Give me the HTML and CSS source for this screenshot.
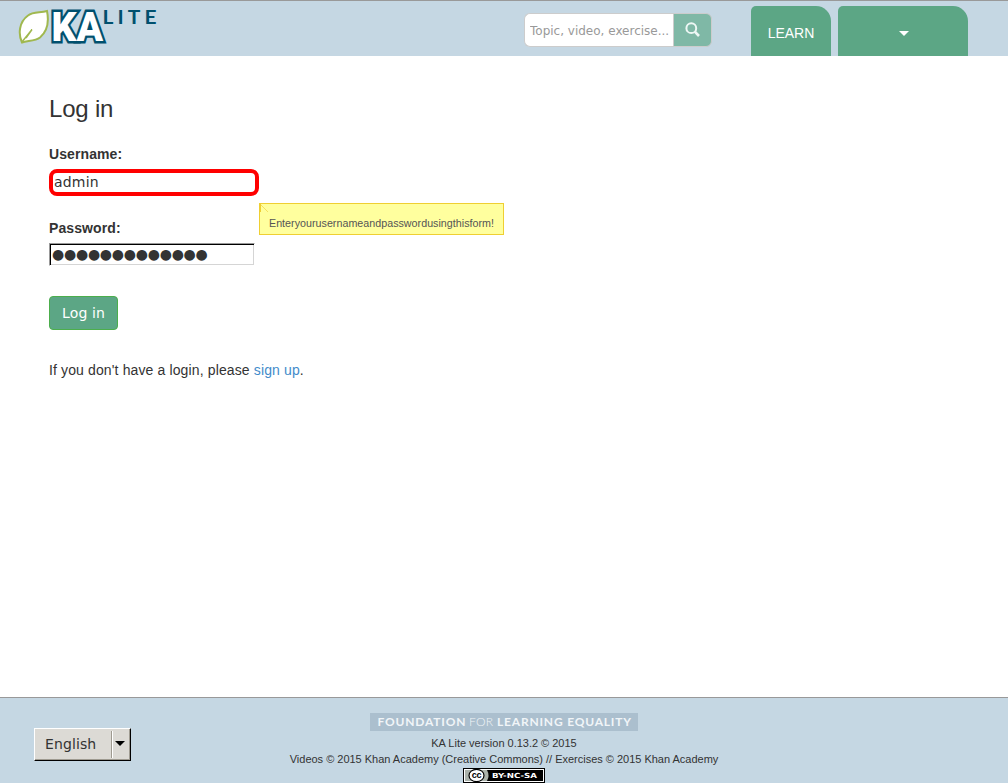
FILE: index.html
```html
<!DOCTYPE html>
<html lang="en">
<head>
<meta charset="utf-8">
<title>Log in | KA Lite</title>
<link rel="stylesheet" href="styles.css">
</head>
<body>
<header class="topbar">
  <a class="logo" aria-label="KA Lite">
    <svg width="150" height="54" viewBox="0 0 150 54">
      <path class="leaf" d="M4 41.500C0 33 1 21 10 14.500C15 10.500 22 12 29 10C31 20 29.500 30 22 36.500C17 40.500 9 39.500 4 41.500Z"/>
      <path class="vein" d="M3.500 41.500L14 28.500L8 37"/>
      <text class="logo-ka" x="33.500" y="40" textLength="51.500" lengthAdjust="spacingAndGlyphs">KA</text>
      <text class="logo-lite" x="84.500" y="22.500" textLength="58" lengthAdjust="spacingAndGlyphs">LITE</text>
    </svg>
  </a>
  <form class="search">
    <input class="search-input" type="text" placeholder="Topic, video, exercise..." aria-label="Search">
    <button class="search-button" type="button" aria-label="Search">
      <svg width="16" height="16" viewBox="0 0 16 16"><circle cx="6.300" cy="6.200" r="4.900"/><path d="M9.800 9.700L14 14"/></svg>
    </button>
  </form>
  <nav class="tabs">
    <a class="tab tab-learn">LEARN</a>
    <a class="tab tab-user"><span class="caret"></span></a>
  </nav>
</header>
<main class="content">
  <h1 class="title">Log in</h1>
  <label class="label" for="username">Username:</label>
  <div class="field-row">
    <input class="username" id="username" type="text" value="admin">
    <div class="hint"><svg class="hint-corner" width="9" height="9" viewBox="0 0 9 9"><path class="fold-side" d="M.5 0V8"/><path class="fold" d="M1 1L8 8"/></svg>Enteryourusernameandpasswordusingthisform!</div>
  </div>
  <div class="label label-password">Password:</div>
  <div class="password">●●●●●●●●●●●●●</div>
  <button class="submit" type="button">Log in</button>
  <p class="signup">If you don't have a login, please <a class="link">sign up</a>.</p>
</main>
<footer class="footer">
  <div class="language"><span class="language-name">English</span><span class="language-arrow"></span></div>
  <div class="credits">
    <svg class="foundation" width="268" height="18" viewBox="0 0 268 18">
      <text class="fle" x="7.500" y="13" textLength="88">FOUNDATION</text>
      <text class="fle fle-light" x="99" y="13" textLength="24">FOR</text>
      <text class="fle" x="127" y="13" textLength="134">LEARNING EQUALITY</text>
    </svg>
    <div class="line">KA Lite version 0.13.2 © 2015</div>
    <div class="line">Videos © 2015 Khan Academy (Creative Commons) // Exercises © 2015 Khan Academy</div>
    <svg class="license" width="82" height="15" viewBox="0 0 82 15">
      <rect width="82" height="15"/>
      <rect class="white-frame" x="1.500" y="1.500" width="79" height="12"/>
      <path class="cc-bg" d="M2 2H24Q27 7.500 24 13H2Z"/>
      <ellipse class="cc-ring" cx="13.500" cy="7.500" rx="7.500" ry="6.200"/>
      <text class="cc" x="8.800" y="10.300" textLength="9.800">cc</text>
      <text class="terms" x="29" y="10.200" textLength="45" lengthAdjust="spacingAndGlyphs">BY-NC-SA</text>
    </svg>
  </div>
</footer>
</body>
</html>
```
FILE: styles.css
```css
* { box-sizing: border-box; }
body {
  margin: 0;
  height: 783px;
  display: flex;
  flex-direction: column;
  overflow: hidden;
  background: #fff;
  color: #333;
  font: 14px/20px "Liberation Sans", Arial, sans-serif;
}
.topbar {
  flex: none;
  height: 56px;
  display: flex;
  background: #c5d7e3;
  border-top: 1px solid #999;
}
.logo { width: 150px; margin-left: 18px; }
.logo svg { display: block; }
.leaf { fill: #fff; stroke: #a0b84f; stroke-width: 2; }
.vein { fill: none; stroke: #a0b84f; stroke-width: 1.500; }
.logo-ka {
  font: 900 41px Roboto, sans-serif;
  fill: #fff;
  stroke: #00506e;
  stroke-width: 4.800;
  paint-order: stroke;
  stroke-linejoin: miter;
}
.logo-lite { font: bold 18px Lato, sans-serif; letter-spacing: 3.500px; fill: #00506e; }
.search { display: flex; width: 188px; height: 34px; margin: 12px 0 0 356px; }
.search-input {
  width: 149px;
  height: 34px;
  padding: 2px 0 0 5px;
  border: 1px solid #ccc;
  border-right: 0;
  border-radius: 6px 0 0 6px;
  background: #fff;
  font: 12px "DejaVu Sans", sans-serif;
}
.search-input::placeholder { color: #999; opacity: 1; }
.search-button {
  width: 39px;
  padding: 0;
  border: 1px solid #ccc;
  border-radius: 0 6px 6px 0;
  background: #7fb8a6;
}
.search-button svg { display: block; margin: -1px auto 0; fill: none; stroke: #eef7f5; stroke-width: 2; }
.search-button path { stroke-width: 2.600; }
.tabs { display: flex; gap: 7px; margin: 5px 0 0 39px; }
.tab {
  display: flex;
  align-items: center;
  justify-content: center;
  height: 50px;
  padding-top: 4px;
  border-radius: 5px 15px 0 0;
  background: #5ca685;
  color: #fff;
}
.tab-learn { width: 80px; }
.tab-user { width: 130px; padding-left: 2px; padding-top: 5px; }
.caret { border: 5px solid transparent; border-top-color: #fff; border-bottom: 0; }
.content { flex: 1; padding: 40px 49px 0; }
.title { margin: 0; font-size: 24px; line-height: 26px; font-weight: normal; letter-spacing: -.2px; }
.label { display: block; margin-top: 22px; font-weight: bold; letter-spacing: .1px; }
.field-row { position: relative; width: 210px; height: 27px; margin-top: 5px; }
.username {
  display: block;
  width: 210px;
  height: 27px;
  padding: 0 1px 2px;
  border: 4px solid #f00;
  border-radius: 8px;
  outline: 0;
  color: #333;
  font: 14px "DejaVu Sans", sans-serif;
  letter-spacing: .2px;
}
.hint {
  position: absolute;
  left: 210px;
  top: 34px;
  width: 245px;
  height: 32px;
  padding: 10px 0 0 9px;
  border: 1px solid #efcf32;
  background: #ffff9e;
  color: #555;
  font-size: 10.700px;
  line-height: 19px;
  letter-spacing: .025px;
  white-space: nowrap;
}
.hint-corner { position: absolute; left: 0; top: 0; fill: none; stroke: #f5df60; }
.fold-side { stroke: #efcf32; }
.label-password { margin-top: 22px; }
.password {
  width: 206px;
  height: 23px;
  margin-top: 5px;
  padding-left: 2px;
  overflow: hidden;
  border: 1px solid;
  border-color: #999 #fff #fff #999;
  box-shadow: inset 1px 1px #000, inset -1px -1px #d5d5d5;
  color: #333;
  font: 14px/20px "DejaVu Sans", sans-serif;
  letter-spacing: -.25px;
}
.submit {
  display: block;
  width: 69px;
  height: 34px;
  margin-top: 30px;
  padding: 0;
  border: 1px solid #4cae4c;
  border-radius: 4px;
  background: #5ca685;
  color: #fff;
  font: 14px "DejaVu Sans", sans-serif;
  letter-spacing: .1px;
}
.signup { margin: 30px 0 0; letter-spacing: .13px; }
.link { color: #428bca; }
.footer {
  position: relative;
  flex: none;
  height: 86px;
  border-top: 1px solid #999;
  background: #c5d7e3;
}
.language {
  position: absolute;
  left: 34px;
  top: 30px;
  width: 97px;
  height: 33px;
  display: flex;
  align-items: center;
  border: 1px solid;
  border-color: #fff #000 #000 #fff;
  box-shadow: inset -1px -1px #9e9a90;
  background: #dcdad5;
  font: 14px "DejaVu Sans", sans-serif;
}
.language-name { width: 76px; padding: 0 0 2px 10px; letter-spacing: .1px; }
.language-arrow {
  display: flex;
  align-items: center;
  height: 27px;
  padding-left: 3px;
  border-left: 1px solid #9e9a90;
  box-shadow: inset 1px 0 #fff;
}
.language-arrow::before { content: ""; border: 5px solid transparent; border-top-color: #000; border-bottom: 0; margin-top: -3px; }
.credits {
  display: flex;
  flex-direction: column;
  align-items: center;
  padding-top: 15px;
  font-size: 11px;
  line-height: 16px;
}
.line { letter-spacing: -.01px; }
.foundation { display: block; margin-bottom: 4px; background: #abbfce; }
.fle { font: bold 12px Lato, sans-serif; fill: #f1f5f8; }
.fle-light { font-weight: 300; }
.license { display: block; margin-top: 1px; }
.white-frame { fill: none; stroke: #fff; }
.cc-bg { fill: #aab2ab; }
.cc-ring { fill: #fff; stroke: #000; stroke-width: 1.200; }
.cc { font: bold 9px "Liberation Sans", sans-serif; }
.terms { font: bold 7px "DejaVu Sans", sans-serif; fill: #fff; }
```
